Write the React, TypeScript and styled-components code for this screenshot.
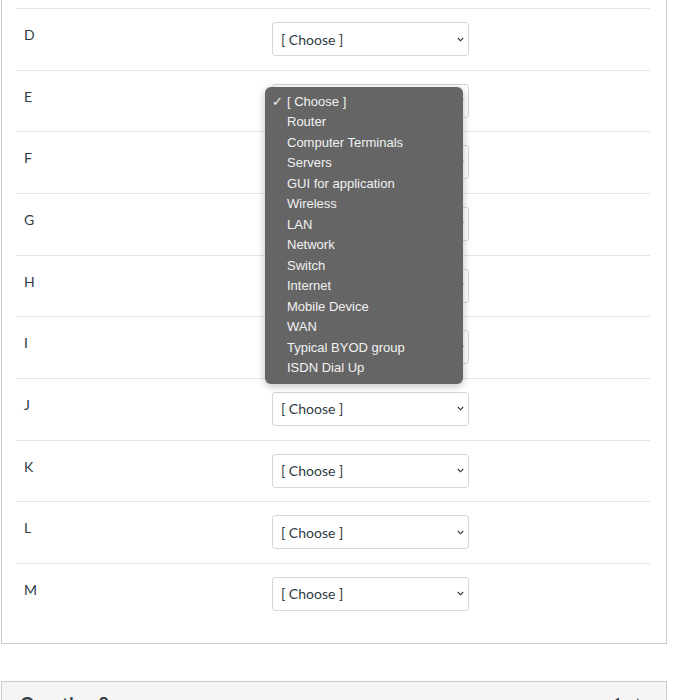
import styled, { createGlobalStyle } from 'styled-components';

const GlobalStyle = createGlobalStyle`
  html, body {
    margin: 0;
    padding: 0;
    background: #ffffff;
    overflow: hidden;
  }
  body {
    font-family: Lato, "Noto Sans", sans-serif;
    color: #2d3b45;
  }
`;

const Page = styled.div`
  width: 673px;
  height: 700px;
  padding-left: 1px;
  box-sizing: border-box;
  overflow: hidden;
`;

const Card = styled.div`
  width: 666px;
  box-sizing: border-box;
  margin-top: -12px;
  padding: 20px 16px 18px 14px;
  border: 1px solid #c7cdd1;
  border-top: none;
  background: #ffffff;
`;

const Row = styled.div`
  display: grid;
  grid-template-columns: 248px 1fr;
  height: 61.67px;
  box-sizing: border-box;
  border-top: 1px solid #e3e5e7;
`;

const Label = styled.div`
  padding: 17px 8px 0;
  font-size: 14px;
  line-height: 18px;
`;

const Cell = styled.div`
  padding: 13px 8px 0;
  position: relative;
`;

const Select = styled.div`
  width: 197px;
  height: 34px;
  box-sizing: border-box;
  border: 1px solid #d4d8db;
  border-radius: 3px;
  background: #ffffff;
  display: flex;
  align-items: center;
  justify-content: space-between;
  padding: 0 4px 0 8px;
  font-size: 14px;
  color: #2d3b45;
`;

const Menu = styled.div`
  position: absolute;
  top: 16px;
  left: 1px;
  width: 198px;
  height: 297px;
  box-sizing: border-box;
  padding: 5px 0;
  border-radius: 6px;
  background: #656565;
  box-shadow: 0 2px 8px rgba(0, 0, 0, 0.25);
  font-family: "Liberation Sans", Arial, sans-serif;
  font-size: 13px;
  color: #f2f2f2;
  z-index: 5;
`;

const MenuItem = styled.div<{ $checked?: boolean }>`
  height: 20.5px;
  line-height: 20.5px;
  padding-left: 22px;
  position: relative;
  white-space: nowrap;

  &::before {
    content: ${(p) => (p.$checked ? '"✓"' : '""')};
    position: absolute;
    left: 7px;
  }
`;

const Gap = styled.div`
  height: 37px;
`;

const QuestionCard = styled.div`
  width: 666px;
  box-sizing: border-box;
  border: 1px solid #c7cdd1;
  background: #f5f5f5;
  display: flex;
  justify-content: space-between;
  padding: 11px 18px 0 18px;
  height: 60px;
`;

const QuestionTitle = styled.div`
  font-size: 18px;
  font-weight: 700;
  color: #2d3b45;
`;

const Points = styled.div`
  font-size: 16px;
  color: #2d3b45;
`;

const Chevron = () => (
  <svg width="7" height="5" viewBox="0 0 7 5">
    <path d="M0.8 1 L3.5 3.8 L6.2 1" fill="none" stroke="#333" strokeWidth="1.1" />
  </svg>
);

const options = [
  '[ Choose ]',
  'Router',
  'Computer Terminals',
  'Servers',
  'GUI for application',
  'Wireless',
  'LAN',
  'Network',
  'Switch',
  'Internet',
  'Mobile Device',
  'WAN',
  'Typical BYOD group',
  'ISDN Dial Up',
];

const rows = ['D', 'E', 'F', 'G', 'H', 'I', 'J', 'K', 'L', 'M'];

const App = () => {
  return (
    <>
      <GlobalStyle />
      <Page>
        <Card>
          {rows.map((r) => (
            <Row key={r}>
              <Label>{r}</Label>
              <Cell>
                <Select>
                  <span>[ Choose ]</span>
                  <Chevron />
                </Select>
                {r === 'E' && (
                  <Menu>
                    {options.map((o, i) => (
                      <MenuItem key={o} $checked={i === 0}>
                        {o}
                      </MenuItem>
                    ))}
                  </Menu>
                )}
              </Cell>
            </Row>
          ))}
        </Card>
        <Gap />
        <QuestionCard>
          <QuestionTitle>Question 8</QuestionTitle>
          <Points>1 pts</Points>
        </QuestionCard>
      </Page>
    </>
  );
};

export default App;
